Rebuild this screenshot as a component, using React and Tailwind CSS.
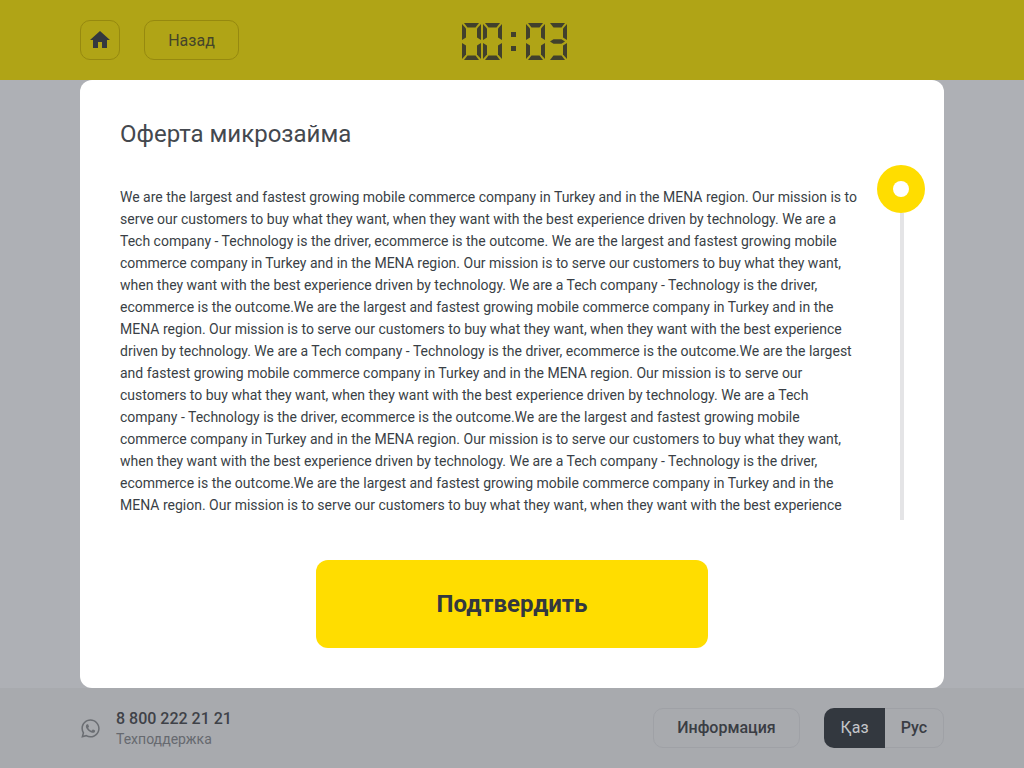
import { MdHome } from "react-icons/md";
import { FaWhatsapp } from "react-icons/fa";

const offerText =
  "We are the largest and fastest growing mobile commerce company in Turkey and in the MENA region. Our mission is to serve our customers to buy what they want, when they want with the best experience driven by technology. We are a Tech company - Technology is the driver, ecommerce is the outcome. We are the largest and fastest growing mobile commerce company in Turkey and in the MENA region. Our mission is to serve our customers to buy what they want, when they want with the best experience driven by technology. We are a Tech company - Technology is the driver, ecommerce is the outcome.We are the largest and fastest growing mobile commerce company in Turkey and in the MENA region. Our mission is to serve our customers to buy what they want, when they want with the best experience driven by technology. We are a Tech company - Technology is the driver, ecommerce is the outcome.We are the largest and fastest growing mobile commerce company in Turkey and in the MENA region. Our mission is to serve our customers to buy what they want, when they want with the best experience driven by technology. We are a Tech company - Technology is the driver, ecommerce is the outcome.We are the largest and fastest growing mobile commerce company in Turkey and in the MENA region. Our mission is to serve our customers to buy what they want, when they want with the best experience driven by technology. We are a Tech company - Technology is the driver, ecommerce is the outcome.We are the largest and fastest growing mobile commerce company in Turkey and in the MENA region. Our mission is to serve our customers to buy what they want, when they want with the best experience";

// seven segment pieces in a 19x37 box
const SEGMENTS = {
  a: "M2 0H17L13.5 4.5H5.5Z",
  b: "M19 1V17L15 14.5V5.5Z",
  c: "M19 20V36L15 31.5V22.5Z",
  d: "M2 37H17L13.5 32.5H5.5Z",
  e: "M0 20V36L4 31.5V22.5Z",
  f: "M0 1V17L4 14.5V5.5Z",
  g: "M2 18.5L5.5 16.3H13.5L17 18.5L13.5 20.7H5.5Z",
};

function Digit({ on }) {
  return (
    <svg width="19" height="37" viewBox="0 0 19 37" fill="#41402c">
      {on.split("").map((s) => (
        <path key={s} d={SEGMENTS[s]} />
      ))}
    </svg>
  );
}

function Timer() {
  return (
    <div className="flex items-center">
      <Digit on="abcdef" />
      <div className="w-[2px]" />
      <Digit on="abcdef" />
      <div className="flex flex-col gap-[9px] ml-[9px] mr-[10px]">
        <div className="w-[5px] h-[5px] bg-[#41402c]" />
        <div className="w-[5px] h-[5px] bg-[#41402c]" />
      </div>
      <Digit on="abcdef" />
      <div className="w-[3px]" />
      <Digit on="abcdg" />
    </div>
  );
}

export default function App() {
  return (
    <div className="w-[1024px] h-[768px] flex flex-col overflow-hidden bg-[#aeb0b5] text-[#3a3f46] font-['Roboto',sans-serif]">
      <header className="relative h-20 shrink-0 bg-[#b0a416] flex items-center px-20 gap-6">
        <button className="w-10 h-10 rounded-[10px] border border-[#96890f] flex items-center justify-center">
          <MdHome size={24} color="#33383f" />
        </button>
        <button className="w-[95px] h-10 pt-[2px] rounded-[10px] border border-[#96890f] text-base text-[#45452a]">
          Назад
        </button>
        <div className="absolute left-[462px] top-[23px]">
          <Timer />
        </div>
      </header>

      <main className="h-[608px] shrink-0 px-20">
        <div className="h-full bg-white rounded-[12px] pt-10 px-10 flex flex-col">
          <h1 className="text-2xl leading-7 text-[#44484e]">Оферта микрозайма</h1>
          <div className="flex mt-[38px] relative">
            <p className="w-[740px] h-[330px] text-sm leading-[22px]">{offerText}</p>
            <div className="absolute left-[757px] top-[-21px] w-12 h-12 rounded-full bg-[#ffdd00] flex items-center justify-center">
              <div className="w-4 h-4 rounded-full bg-white" />
            </div>
            <div className="absolute left-[780px] top-[27px] w-[4px] h-[307px] bg-[#e4e4e6]" />
          </div>
          <button className="mt-[44px] mx-auto w-[392px] h-[88px] rounded-[12px] bg-[#ffdd00] text-2xl font-bold text-[#33383f]">
            Подтвердить
          </button>
        </div>
      </main>

      <footer className="flex-1 bg-[#a8aaae] flex items-center justify-between px-20">
        <div className="flex items-center gap-[15px]">
          <FaWhatsapp size={21} color="#6b6e73" />
          <div className="pt-[1px]">
            <div className="text-base leading-5 font-medium text-[#3f4248]">8 800 222 21 21</div>
            <div className="text-sm leading-5 text-[#66696f]">Техподдержка</div>
          </div>
        </div>
        <div className="flex items-center gap-6">
          <button className="w-[147px] h-10 rounded-[10px] border border-[#9fa1a6] text-base font-medium text-[#3a3d44]">
            Информация
          </button>
          <div className="flex h-10 w-[120px] rounded-[10px] border border-[#9fa1a6]">
            <div className="w-[61px] -m-[1px] mr-0 rounded-l-[10px] bg-[#33383f] text-[#c4c6ca] text-base flex items-center justify-center">
              Қаз
            </div>
            <div className="flex-1 flex items-center justify-center text-base font-medium text-[#3a3d44]">Рус</div>
          </div>
        </div>
      </footer>
    </div>
  );
}
